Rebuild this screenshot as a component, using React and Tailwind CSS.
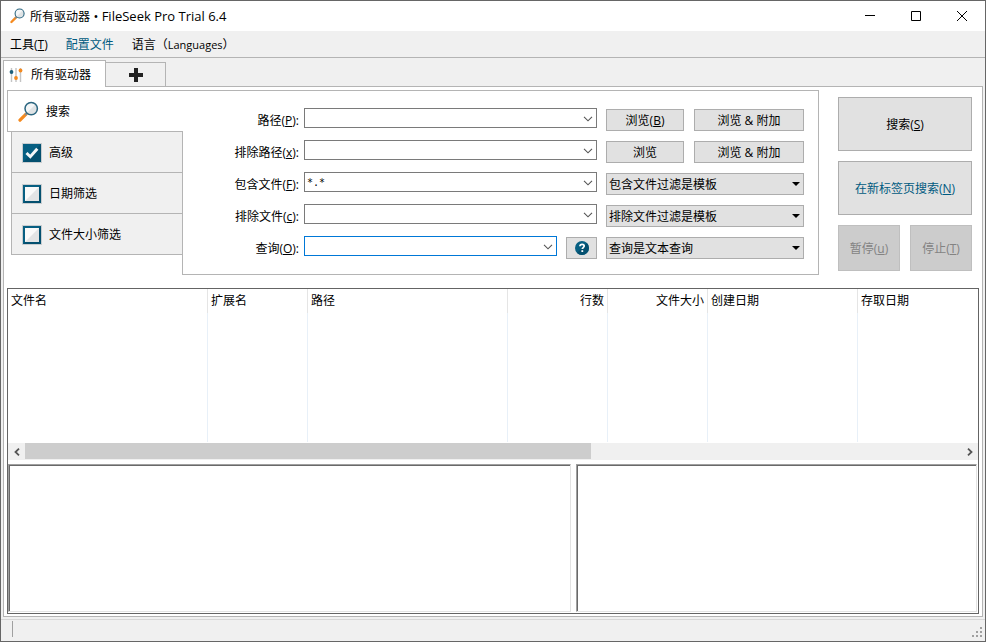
import { useState } from "react"

const tabs = [
  { id: "advanced", label: "高级", on: true },
  { id: "date", label: "日期筛选", on: false },
  { id: "size", label: "文件大小筛选", on: false },
]

const columns = [
  { name: "文件名", width: "w-[200px]" },
  { name: "扩展名", width: "w-[100px]" },
  { name: "路径", width: "w-[200px]" },
  { name: "行数", width: "w-[100px]", right: true },
  { name: "文件大小", width: "w-[100px]", right: true },
  { name: "创建日期", width: "w-[150px]" },
  { name: "存取日期", width: "", last: true },
]

function Key({ k }) {
  return (
    <>
      (<span className="underline underline-offset-1">{k}</span>)
    </>
  )
}

function Magnifier({ className }) {
  return (
    <svg viewBox="0 0 22 22" className={className} aria-hidden="true">
      <path d="M8 13.2 2 19.2" stroke="#f58a1f" strokeWidth="3.2" strokeLinecap="round" />
      <path d="M9 12.2 7.2 14" stroke="#8a8f93" strokeWidth="2" />
      <circle cx="13.2" cy="7.6" r="6.2" fill="#f4f6f7" />
      <path d="M17.6 3.2a6.2 6.2 0 0 1-8.8 8.8z" fill="#dfe3e5" />
      <circle cx="13.2" cy="7.6" r="6.2" fill="none" stroke="#2b6680" strokeWidth="1.5" />
    </svg>
  )
}

function Sliders() {
  return (
    <svg viewBox="0 0 14 16" className="w-3.5 h-4" aria-hidden="true">
      <path d="M2.5 1v14M7 1v14M11.5 1v14" stroke="#c4c4c4" strokeWidth="1.4" />
      <circle cx="2.5" cy="5" r="1.9" fill="#1c5f7c" />
      <circle cx="7" cy="11" r="1.9" fill="#f58a1f" />
      <circle cx="11.5" cy="3.5" r="1.9" fill="#f58a1f" />
    </svg>
  )
}

function Chevron() {
  return (
    <svg viewBox="0 0 10 6" className="w-2.5 h-1.5" aria-hidden="true">
      <path d="M1 .8 5 4.8 9 .8" fill="none" stroke="#555" strokeWidth="1.1" />
    </svg>
  )
}

function TickBox({ checked }) {
  return (
    <svg viewBox="0 0 20 20" className="absolute inset-0 w-5 h-5 pointer-events-none" aria-hidden="true">
      <rect x="0" y="0" width="20" height="20" fill="#c9cdd0" />
      <rect x="1" y="1" width="18" height="18" fill="#075f82" />
      <path d="M19 1v18H1z" fill="#04506f" />
      {checked ? (
        <path d="M4.5 10 8.3 13.7 15.3 5.8" fill="none" stroke="#f4f6f7" strokeWidth="3" />
      ) : (
        <>
          <rect x="3" y="3" width="14" height="14" fill="#fafafa" />
          <path d="M17 3v14H3z" fill="#e3e4e5" />
        </>
      )}
    </svg>
  )
}

function SideTab({ id, label, on }) {
  const [checked, setChecked] = useState(on)
  return (
    <label
      htmlFor={id}
      className="flex items-center gap-[7px] h-[41px] ml-1 pt-px pl-2.5 bg-[#f0f0f0] border-l border-b border-[#b4b4b4]"
    >
      <span className="relative w-5 h-5">
        <input
          id={id}
          type="checkbox"
          checked={checked}
          onChange={(e) => setChecked(e.target.checked)}
          className="appearance-none block w-5 h-5"
        />
        <TickBox checked={checked} />
      </span>
      {label}
    </label>
  )
}

function Combo({ id, value = "", active }) {
  return (
    <div className={`flex flex-1 min-w-0 h-5 bg-white border ${active ? "border-[#0078d7]" : "border-[#7a7a7a]"}`}>
      <input
        id={id}
        defaultValue={value}
        className="flex-1 min-w-0 px-0.5 pt-0.5 bg-transparent outline-none text-[10px] leading-4 font-['DejaVu_Sans_Mono',monospace]"
      />
      <button type="button" aria-label="展开" className="w-[17px] flex items-center justify-center pt-0.5">
        <Chevron />
      </button>
    </div>
  )
}

function Row({ id, label, k, value, active, extra, children }) {
  return (
    <div className="flex gap-[9px] h-[23px]">
      <div className="flex flex-1 min-w-0 gap-[5px]">
        <label htmlFor={id} className="w-[116px] pt-[5px] text-right whitespace-nowrap">
          {label}
          <Key k={k} />:
        </label>
        <Combo id={id} value={value} active={active} />
      </div>
      {extra}
      <div className="flex items-end gap-2.5 w-[198px]">{children}</div>
    </div>
  )
}

function Button({ className = "", children, ...rest }) {
  return (
    <button type="button" className={`bg-[#e1e1e1] border border-[#adadad] ${className}`} {...rest}>
      {children}
    </button>
  )
}

function Drop({ label }) {
  return (
    <div className="relative flex-1">
      <select
        aria-label={label}
        className="appearance-none block w-full h-[22px] pt-0.5 pl-0.5 pr-5 bg-[#e1e1e1] border border-[#adadad] outline-none"
      >
        <option>{label}</option>
      </select>
      <svg viewBox="0 0 8 4" className="absolute right-1 top-[9px] w-2 h-1 pointer-events-none" aria-hidden="true">
        <path d="M0 0h8L4 4z" fill="#000" />
      </svg>
    </div>
  )
}

export default function App() {
  return (
    <div className="min-h-screen flex flex-col bg-[#f0f0f0] border border-[#666] text-black text-[12px] leading-4 font-['Open_Sans','Noto_Sans_CJK_SC',sans-serif]">
      {/* Title bar */}
      <header className="flex items-center h-[30px] pl-[9px] bg-white">
        <Magnifier className="w-4 h-4" />
        <h1 className="flex-1 pl-1">
          所有驱动器<span className="text-[13px]"> • FileSeek Pro Trial 6.4</span>
        </h1>
        <button type="button" aria-label="最小化" className="w-[46px] h-full flex items-center justify-center">
          <svg viewBox="0 0 10 10" className="w-2.5 h-2.5">
            <path d="M0 4.5h10" stroke="#000" />
          </svg>
        </button>
        <button type="button" aria-label="最大化" className="w-[46px] h-full flex items-center justify-center">
          <svg viewBox="0 0 10 10" className="w-2.5 h-2.5">
            <path d="M.5.5h9v9h-9z" fill="none" stroke="#000" />
          </svg>
        </button>
        <button type="button" aria-label="关闭" className="w-[46px] h-full flex items-center justify-center">
          <svg viewBox="0 0 10 10" className="w-2.5 h-2.5">
            <path d="M0 0l10 10M10 0 0 10" stroke="#000" />
          </svg>
        </button>
      </header>

      {/* Menu */}
      <nav className="flex items-center gap-[18px] h-[27px] pt-px pl-[9px] border-b border-[#b4b4b4]">
        <button type="button">
          工具
          <Key k="T" />
        </button>
        <button type="button" className="text-[#005a80]">配置文件</button>
        <button type="button">
          语言（<span className="text-[11px]">Languages</span>）
        </button>
      </nav>

      {/* Document tabs */}
      <div className="flex items-end h-7 pl-0.5">
        <button
          type="button"
          className="relative -mb-px flex items-center gap-2 w-[103px] h-[27px] pt-px pl-[5px] bg-white border border-b-0 border-[#b4b4b4]"
        >
          <Sliders />
          所有驱动器
        </button>
        <button
          type="button"
          aria-label="新标签页"
          className="flex items-center justify-center w-[60px] h-6 border-t border-r border-[#b4b4b4]"
        >
          <svg viewBox="0 0 14 14" className="w-3.5 h-3.5" aria-hidden="true">
            <path d="M7 0v14M0 7h14" stroke="#222" strokeWidth="4" />
          </svg>
        </button>
      </div>

      <main className="flex-1 flex flex-col gap-[13px] mx-0.5 px-[3px] pt-[3px] pb-0.5 bg-white border border-[#b4b4b4]">
        {/* Search form */}
        <form className="flex" onSubmit={(e) => e.preventDefault()}>
          <div className="w-[176px] flex flex-col">
            <button
              type="button"
              className="flex items-center gap-[6px] h-[42px] pt-px pl-2.5 border border-r-0 border-[#b4b4b4]"
            >
              <Magnifier className="w-[22px] h-[22px]" />
              搜索
            </button>
            <div className="flex-1 border-r border-[#b4b4b4]">
              {tabs.map((t) => (
                <SideTab key={t.id} {...t} />
              ))}
            </div>
          </div>

          <div className="flex-1 min-w-0 flex flex-col gap-[9px] pt-[17px] pb-[15px] pr-3.5 border border-l-0 border-[#b4b4b4]">
            <Row id="path" label="路径" k="P">
              <Button className="w-[78px] h-[22px] pt-0.5">
                浏览
                <Key k="B" />
              </Button>
              <Button className="flex-1 h-[22px] pt-0.5">浏览 &amp; 附加</Button>
            </Row>
            <Row id="xpath" label="排除路径" k="x">
              <Button className="w-[78px] h-[22px] pt-0.5">浏览</Button>
              <Button className="flex-1 h-[22px] pt-0.5">浏览 &amp; 附加</Button>
            </Row>
            <Row id="files" label="包含文件" k="F" value="*.*">
              <Drop label="包含文件过滤是模板" />
            </Row>
            <Row id="xfiles" label="排除文件" k="c">
              <Drop label="排除文件过滤是模板" />
            </Row>
            <Row
              id="query"
              label="查询"
              k="O"
              active
              extra={
                <Button aria-label="帮助" className="self-end flex items-center justify-center w-[31px] h-[22px]">
                  <svg viewBox="0 0 14 14" className="w-3.5 h-3.5" aria-hidden="true">
                    <circle cx="7" cy="7" r="7" fill="#075f82" />
                    <path d="M11.9 2A7 7 0 0 1 2 11.9z" fill="#04506f" />
                    <path
                      d="M4.9 5.3C5 3.9 6 3.3 7.1 3.3c1.2 0 2.1.7 2.1 1.8 0 1.4-1.9 1.5-1.9 3"
                      fill="none"
                      stroke="#fff"
                      strokeWidth="1.7"
                    />
                    <rect x="6.4" y="9.2" width="1.8" height="1.8" fill="#fff" />
                  </svg>
                </Button>
              }
            >
              <Drop label="查询是文本查询" />
            </Row>
          </div>

          <div className="flex flex-col gap-2.5 w-[160px] pt-[7px] pl-[19px] pr-[7px]">
            <Button className="h-[54px] pt-0.5">
              搜索
              <Key k="S" />
            </Button>
            <Button className="h-[54px] pt-0.5 text-[#005a80]">
              在新标签页搜索
              <Key k="N" />
            </Button>
            <div className="flex gap-2.5">
              <button type="button" disabled className="flex-1 h-[46px] pt-0.5 bg-[#ccc] border border-[#bfbfbf] text-[#838383]">
                暂停
                <Key k="u" />
              </button>
              <button type="button" disabled className="flex-1 h-[46px] pt-0.5 bg-[#ccc] border border-[#bfbfbf] text-[#838383]">
                停止
                <Key k="T" />
              </button>
            </div>
          </div>
        </form>

        {/* Results */}
        <section className="flex-1 flex flex-col border border-[#646464]">
          <table className="w-full table-fixed border-separate border-spacing-0">
            <thead>
              <tr className="h-6">
                {columns.map((c) => (
                  <th
                    key={c.name}
                    className={`${c.width} px-[3px] py-0 font-normal ${c.right ? "text-right" : "text-left"} ${c.last ? "" : "border-r border-[#e5e5e5]"}`}
                  >
                    {c.name}
                  </th>
                ))}
              </tr>
            </thead>
            <tbody>
              <tr className="h-[129px]">
                {columns.map((c) => (
                  <td key={c.name} className={c.last ? "p-0" : "p-0 border-r border-[#e8f0f8]"} />
                ))}
              </tr>
            </tbody>
          </table>

          {/* Horizontal scrollbar */}
          <div className="flex h-[17px] mt-px bg-[#f0f0f0]">
            <button type="button" aria-label="向左滚动" className="w-[17px] flex items-center justify-center">
              <svg viewBox="0 0 6 8" className="w-1.5 h-2">
                <path d="M5 .7 1.5 4 5 7.3" fill="none" stroke="#555" strokeWidth="1.8" />
              </svg>
            </button>
            <div className="flex-1">
              <div className="w-[60.5%] h-4 bg-[#cdcdcd]" />
            </div>
            <button type="button" aria-label="向右滚动" className="w-[17px] flex items-center justify-center">
              <svg viewBox="0 0 6 8" className="w-1.5 h-2">
                <path d="M1 .7 4.5 4 1 7.3" fill="none" stroke="#555" strokeWidth="1.8" />
              </svg>
            </button>
          </div>

          {/* Preview panes */}
          <div className="flex-1 flex gap-[5px] pt-1 pr-px pb-px">
            <div className="flex-1 flex border border-t-[#a0a0a0] border-l-[#a0a0a0] border-r-[#e3e3e3] border-b-[#e3e3e3]">
              <div className="flex-1 border-t border-l border-[#696969]" />
            </div>
            <div className="w-[401px] flex border border-t-[#a0a0a0] border-l-[#a0a0a0] border-r-[#e3e3e3] border-b-[#e3e3e3]">
              <div className="flex-1 border-t border-l border-[#696969]" />
            </div>
          </div>
        </section>
      </main>

      {/* Status bar */}
      <footer className="flex items-end justify-between h-[22px] mt-0.5 pl-[11px] pr-0.5 pb-[3px] border-t border-[#d7d7d7]">
        <span className="w-px h-4 mb-px bg-[#a0a0a0]" />
        <svg viewBox="0 0 11 11" className="w-[11px] h-[11px]" aria-hidden="true">
          <path d="M8 0h2v2H8zM4 4h2v2H4zM8 4h2v2H8zM0 8h2v2H0zM4 8h2v2H4zM8 8h2v2H8z" fill="#a0a0a0" />
        </svg>
      </footer>
    </div>
  )
}
